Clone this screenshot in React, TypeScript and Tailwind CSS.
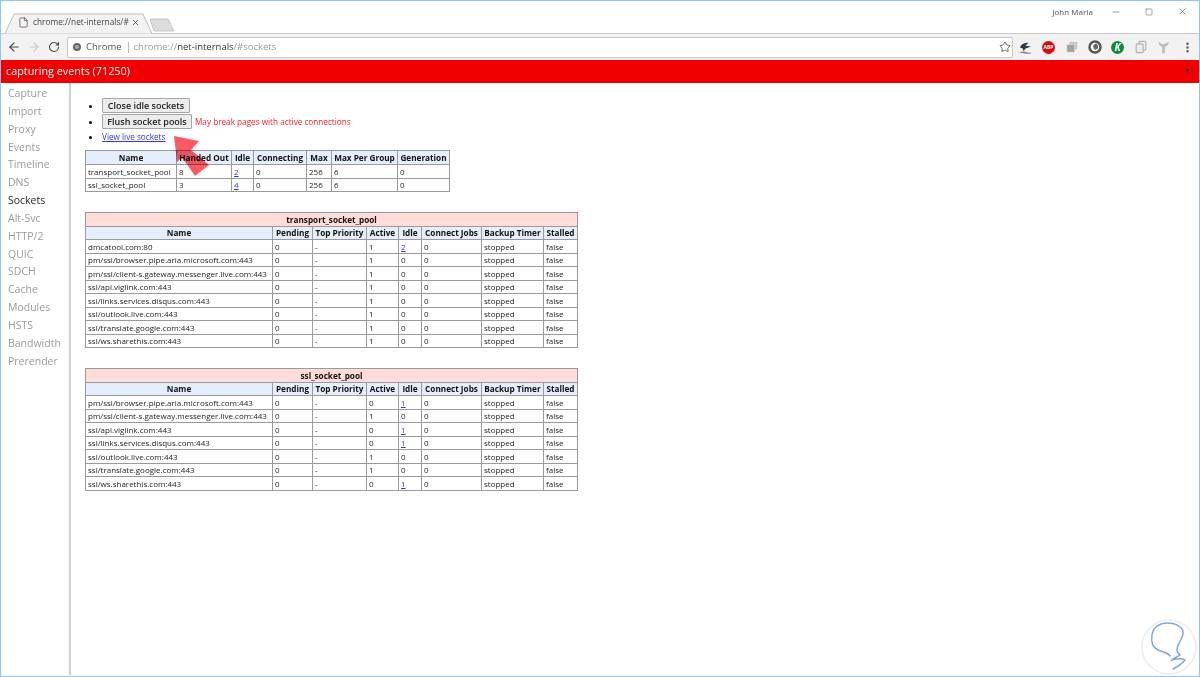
import { ArrowLeft, ArrowRight, RotateCw, Star, X, Minus, Square, File, MoreVertical } from 'lucide-react';

const navItems = ['Capture', 'Import', 'Proxy', 'Events', 'Timeline', 'DNS', 'Sockets', 'Alt-Svc', 'HTTP/2', 'QUIC', 'SDCH', 'Cache', 'Modules', 'HSTS', 'Bandwidth', 'Prerender'];

const poolCols = [91, 55, 22, 53, 25, 66, 52];
const poolHead = ['Name', 'Handed Out', 'Idle', 'Connecting', 'Max', 'Max Per Group', 'Generation'];
const poolRows = [
  ['transport_socket_pool', '8', '2', '0', '256', '6', '0'],
  ['ssl_socket_pool', '3', '4', '0', '256', '6', '0'],
];

const groupCols = [187, 40, 54, 32, 23, 60, 62, 34];
const groupHead = ['Name', 'Pending', 'Top Priority', 'Active', 'Idle', 'Connect Jobs', 'Backup Timer', 'Stalled'];

const transportRows = [
  ['dmcatool.com:80', '1', '2'],
  ['pm/ssl/browser.pipe.aria.microsoft.com:443', '1', '0'],
  ['pm/ssl/client-s.gateway.messenger.live.com:443', '1', '0'],
  ['ssl/api.viglink.com:443', '1', '0'],
  ['ssl/links.services.disqus.com:443', '1', '0'],
  ['ssl/outlook.live.com:443', '1', '0'],
  ['ssl/translate.google.com:443', '1', '0'],
  ['ssl/ws.sharethis.com:443', '1', '0'],
];

const sslRows = [
  ['pm/ssl/browser.pipe.aria.microsoft.com:443', '0', '1'],
  ['pm/ssl/client-s.gateway.messenger.live.com:443', '1', '0'],
  ['ssl/api.viglink.com:443', '0', '1'],
  ['ssl/links.services.disqus.com:443', '0', '1'],
  ['ssl/outlook.live.com:443', '1', '0'],
  ['ssl/translate.google.com:443', '1', '0'],
  ['ssl/ws.sharethis.com:443', '0', '1'],
];

function Idle({ value }: { value: string }) {
  if (value === '0') return <>{value}</>;
  return <a className="text-[#3434e6] underline">{value}</a>;
}

function Cell({ children }: { children: React.ReactNode }) {
  return <td className="border border-[#9a9a9a] px-[2px] py-0 whitespace-nowrap overflow-hidden">{children}</td>;
}

function HeadCell({ children }: { children: React.ReactNode }) {
  return (
    <th className="border border-[#9a9a9a] bg-[#e4eefc] px-0 py-0 text-center text-[8.2px] font-bold whitespace-nowrap overflow-hidden text-[#111]">
      {children}
    </th>
  );
}

function GroupTable({ title, rows }: { title: string; rows: string[][] }) {
  return (
    <table className="table-fixed border-collapse w-[492px] text-[8px] leading-[12px] text-[#222]">
      <colgroup>
        {groupCols.map((w, i) => (
          <col key={i} style={{ width: w }} />
        ))}
      </colgroup>
      <thead>
        <tr className="h-[14px]">
          <th colSpan={8} className="border border-[#9a9a9a] bg-[#ffdcd8] p-0 text-center text-[8.2px] font-bold text-[#111]">
            {title}
          </th>
        </tr>
        <tr className="h-[13px]">
          {groupHead.map((h) => (
            <HeadCell key={h}>{h}</HeadCell>
          ))}
        </tr>
      </thead>
      <tbody>
        {rows.map((r, i) => (
          <tr key={r[0]} className={i % 2 === 0 ? 'h-[14px]' : 'h-[13px]'}>
            <Cell>{r[0]}</Cell>
            <Cell>0</Cell>
            <Cell>-</Cell>
            <Cell>{r[1]}</Cell>
            <Cell>
              <Idle value={r[2]} />
            </Cell>
            <Cell>0</Cell>
            <Cell>stopped</Cell>
            <Cell>false</Cell>
          </tr>
        ))}
      </tbody>
    </table>
  );
}

function ExtensionIcons() {
  return (
    <div className="ml-[1px] flex items-center">
      <span className="flex w-[23px] justify-center">
        <svg width="15" height="15" viewBox="0 0 16 16">
          <path d="M1 13c3-1 6-1 9 0 1 .4 3 .8 5 .5-2 1.500-5 1.500-8 1-2-.4-4-.8-6-1.500z" fill="#888" />
          <path d="M2 8c2-4 5-5 9-5l-3 3 6 1-6 2-2 3-1-3z" fill="#2c3a4a" />
        </svg>
      </span>
      <span className="flex w-[23px] justify-center">
        <span className="flex h-[13px] w-[13px] items-center justify-center rounded-full bg-[#d40d14] text-[5px] font-bold leading-none text-white">
          ABP
        </span>
      </span>
      <span className="flex w-[23px] justify-center">
        <svg width="14" height="14" viewBox="0 0 16 16">
          <rect x="5" y="2" width="9" height="9" rx="1" fill="#c8c8c8" />
          <rect x="2" y="5" width="9" height="9" rx="1" fill="#a2a2a2" stroke="#eee" strokeWidth=".6" />
        </svg>
      </span>
      <span className="flex w-[23px] justify-center">
        <svg width="14" height="14" viewBox="0 0 14 14">
          <circle cx="7" cy="7" r="5.500" fill="#fff" stroke="#555" strokeWidth="2.500" />
          <path d="M5 6c1-2 3-3 4-2l1 2v2c-1 2-3 2-4 1z" fill="#666" />
        </svg>
      </span>
      <span className="flex w-[23px] justify-center">
        <span className="flex h-[13px] w-[13px] items-center justify-center rounded-full bg-[#0d8a3c] text-[10px] font-bold italic leading-none text-white">
          K
        </span>
      </span>
      <span className="flex w-[23px] justify-center">
        <svg width="14" height="14" viewBox="0 0 16 16" fill="none" stroke="#b0b0b0" strokeWidth="1.300">
          <rect x="5.500" y="1.500" width="8" height="10" rx="1.500" />
          <rect x="2.500" y="4.500" width="8" height="10" rx="1.500" fill="#ececec" />
        </svg>
      </span>
      <span className="flex w-[23px] justify-center">
        <svg width="14" height="14" viewBox="0 0 16 16">
          <path d="M1 2l6 3 7-3-2 4-3 2v7H6V8L3 6z" fill="#bcbcbc" />
        </svg>
      </span>
    </div>
  );
}

export default function App() {
  return (
    <div
      className="relative h-[677px] w-[1200px] overflow-hidden border border-[#90c4f5] bg-white text-[#333]"
      style={{ fontFamily: '"Open Sans", "Noto Sans", sans-serif' }}
    >
      {/* title / tab strip */}
      <div className="relative flex h-[33px] items-end border-b border-[#c9c9c9] bg-white">
        <svg className="absolute left-0 top-0" width="180" height="33" viewBox="0 0 180 33">
          <path d="M4 32.500 L13 13 L142 13 L151 32.500" fill="#f2f2f2" stroke="#bdbdbd" />
          <path d="M149 18 L167 18 L173 30 L153 30 Z" fill="#dcdcdc" stroke="#c4c4c4" />
        </svg>
        <div className="relative z-10 ml-[17px] mb-[2px] flex h-[18px] items-center">
          <File size={11} strokeWidth={1.500} className="shrink-0 text-[#444]" />
          <span className="ml-[4px] w-[96px] overflow-hidden whitespace-nowrap text-[8.300px] leading-none text-[#444]">chrome://net-internals/#</span>
          <X size={9} strokeWidth={2.200} className="ml-[2px] text-[#444]" />
        </div>
        <span className="absolute right-[106px] top-[6px] text-[7.800px] font-semibold text-[#777]">John Maria</span>
        <div className="absolute right-[11px] top-[5px] flex items-center gap-[24px] text-[#555]">
          <Minus size={10} strokeWidth={1.500} />
          <Square size={8} strokeWidth={1.500} />
          <X size={11} strokeWidth={1.300} />
        </div>
      </div>

      {/* toolbar */}
      <div className="flex h-[26px] items-center bg-[#f2f2f2] pl-[6px] pr-[5px]">
        <ArrowLeft size={14} strokeWidth={2} className="text-[#444]" />
        <ArrowRight size={14} strokeWidth={2} className="ml-[6px] text-[#c8c8c8]" />
        <RotateCw size={12} strokeWidth={2.200} className="ml-[7px] text-[#444]" />
        <div className="ml-[7px] flex h-[21px] w-[946px] items-center rounded-[2px] border border-[#c6c6c6] bg-white pl-[5px] pr-[1px] text-[9.500px]">
          <span className="h-[8px] w-[8px] rounded-full border-[2px] border-[#666] bg-[#aaa]" />
          <span className="ml-[5px] text-[#555]">Chrome</span>
          <span className="ml-[6px] h-[11px] w-px bg-[#bbb]" />
          <span className="ml-[5px] text-[#999]">
            chrome://<span className="text-[#333]">net-internals</span>/#sockets
          </span>
          <Star size={12} strokeWidth={1.600} className="ml-auto text-[#444]" />
        </div>
        <ExtensionIcons />
        <MoreVertical size={13} strokeWidth={2.500} className="ml-auto text-[#555]" />
      </div>

      {/* status bar */}
      <div className="flex h-[23px] items-center justify-between bg-[#f00000] pl-[5px] pr-[8px] text-[10.800px] text-white">
        <span>capturing events (71250)</span>
        <span className="text-[7px] text-[#222]">▼</span>
      </div>

      <div className="flex">
        {/* side tabs */}
        <nav className="flex h-[592px] w-[70px] shrink-0 flex-col border-r-2 border-[#cfcfcf] pl-[7px] pt-[2px] text-[10.500px] leading-[17.850px] text-[#999]">
          {navItems.map((item) => (
            <span key={item} className={item === 'Sockets' ? 'text-[#222]' : ''}>
              {item}
            </span>
          ))}
        </nav>

        {/* sockets view */}
        <main className="pl-[14px]">
          <ul className="ml-[17px] mt-[15px] list-disc text-[9px] marker:text-black">
            <li className="h-[16px]">
              <button className="h-[15px] w-[88px] rounded-[1px] border border-[#a5a5a5] bg-[#ececec] text-[9px] font-semibold leading-none text-[#222]">
                Close idle sockets
              </button>
            </li>
            <li className="h-[16px]">
              <button className="h-[15px] w-[90px] rounded-[1px] border border-[#a5a5a5] bg-[#ececec] text-[9px] font-semibold leading-none text-[#222]">
                Flush socket pools
              </button>
              <span className="ml-[3px] text-[8.200px] text-[#f5202f]">May break pages with active connections</span>
            </li>
            <li className="h-[13px] leading-[13px]">
              <a className="text-[8.200px] text-[#3434e6] underline">View live sockets</a>
            </li>
          </ul>

          <table className="mt-[7px] table-fixed border-collapse w-[364px] text-[8px] leading-[12px] text-[#222]">
            <colgroup>
              {poolCols.map((w, i) => (
                <col key={i} style={{ width: w }} />
              ))}
            </colgroup>
            <thead>
              <tr className="h-[14px]">
                {poolHead.map((h) => (
                  <HeadCell key={h}>{h}</HeadCell>
                ))}
              </tr>
            </thead>
            <tbody>
              {poolRows.map((r, j) => (
                <tr key={r[0]} className={j === 0 ? 'h-[14px]' : 'h-[13px]'}>
                  {r.map((v, i) => (
                    <Cell key={i}>{i === 2 ? <Idle value={v} /> : v}</Cell>
                  ))}
                </tr>
              ))}
            </tbody>
          </table>

          <div className="mt-[20px]">
            <GroupTable title="transport_socket_pool" rows={transportRows} />
          </div>
          <div className="mt-[20px]">
            <GroupTable title="ssl_socket_pool" rows={sslRows} />
          </div>
        </main>
      </div>

      {/* annotation arrow */}
      <svg className="absolute left-[170px] top-[130px] mix-blend-multiply" width="45" height="50" viewBox="0 0 45 50">
        <path d="M3 5 L28 10 L20 19 L38 34 L24 45 L11 26 L6 31 Z" fill="#ff5a64" />
      </svg>

      {/* watermark */}
      <svg className="absolute bottom-0 right-0" width="58" height="62" viewBox="0 0 58 62" fill="none">
        <circle cx="28" cy="33" r="27" fill="#fff" stroke="#e8eef5" strokeWidth="1.500" />
        <path
          d="M29 42C26 38 21 38 17 36C11 33 10 27 11 21C12 13 19 9 26 9C36 9 43 14 42 20C41 26 36 30 36 36C36 39 38 40 39 41C36 43 33 44 31 46C35 45 41 44 44 46C41 50 36 53 32 55"
          stroke="#7ea8d8"
          strokeWidth="1.500"
          strokeLinecap="round"
        />
      </svg>
    </div>
  );
}
